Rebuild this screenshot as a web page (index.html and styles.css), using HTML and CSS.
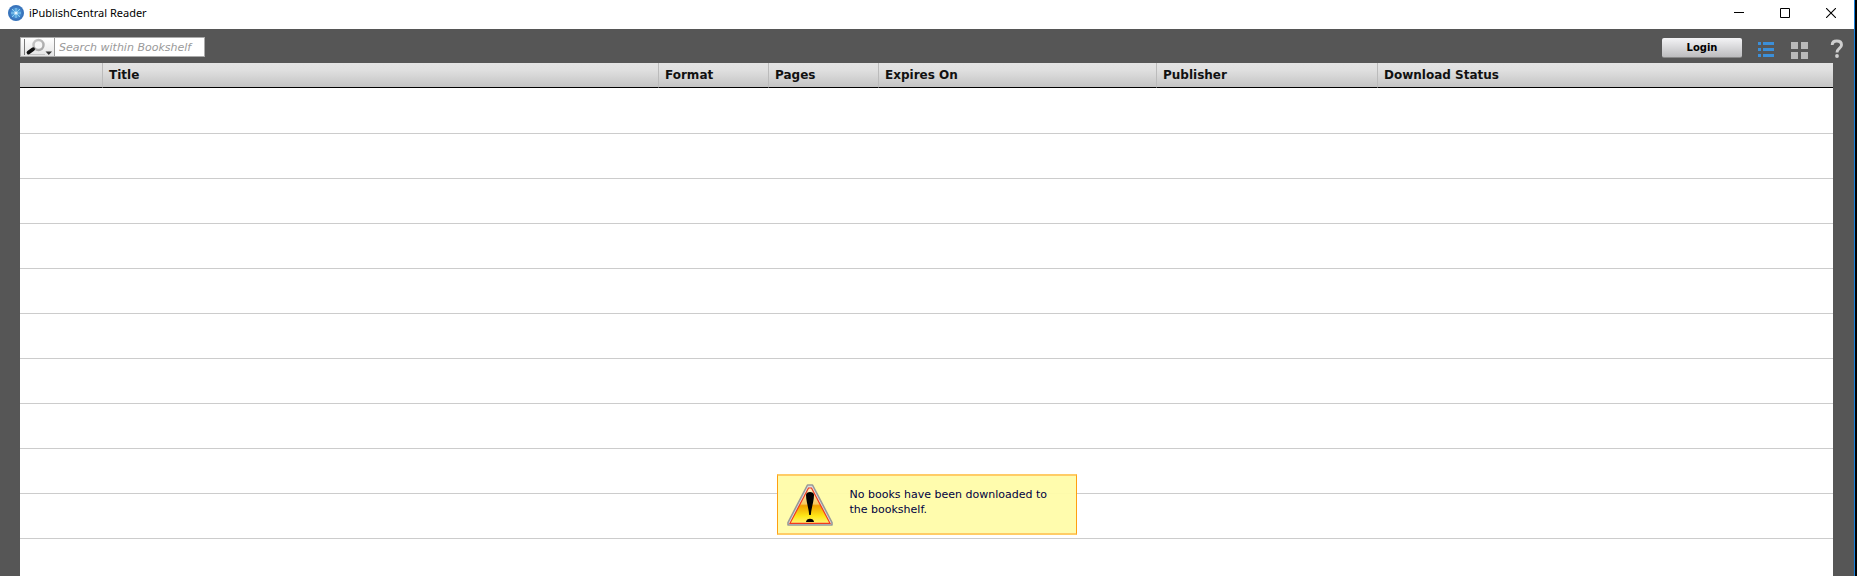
FILE: index.html
```html
<!DOCTYPE html>
<html lang="en">
<head>
<meta charset="utf-8">
<title>iPublishCentral Reader</title>
<link rel="stylesheet" href="styles.css">
</head>
<body>
<div class="window">
  <header class="titlebar">
    <svg class="app-icon" width="16" height="16" viewBox="0 0 16 16" aria-hidden="true">
      <circle cx="8" cy="8" r="8" fill="#3f7dc4"/>
      <circle cx="8" cy="8" r="7" fill="none" stroke="#3870b6"/>
      <circle cx="8" cy="8" r="5" fill="#4d9ad8"/>
      <path d="M8 3v10M3 8h10M4 4l8 8M12 4l-8 8" stroke="#8fcdf0" stroke-width="1"/>
      <circle cx="8" cy="8" r="1.6" fill="#e8f7ff"/>
    </svg>
    <h1 class="app-title">iPublishCentral Reader</h1>
    <div class="window-controls">
      <button class="window-button" type="button" aria-label="Minimize">
        <svg width="10" height="10" viewBox="0 0 10 10"><path d="M0 4.500h10" stroke="#000"/></svg>
      </button>
      <button class="window-button" type="button" aria-label="Maximize">
        <svg width="10" height="10" viewBox="0 0 10 10"><path d="M.5.5h9v9h-9z" fill="none" stroke="#000"/></svg>
      </button>
      <button class="window-button" type="button" aria-label="Close">
        <svg width="10" height="10" viewBox="0 0 10 10"><path d="M0 0l10 10M10 0L0 10" stroke="#000" stroke-width="1.100"/></svg>
      </button>
    </div>
  </header>

  <div class="toolbar">
    <form class="search">
      <button class="search-scope" type="button" aria-label="Search options">
        <svg width="32" height="18" viewBox="0 0 32 18">
          <defs>
            <linearGradient id="rim" x1="0" y1="0" x2="1" y2="1"><stop offset="0" stop-color="#c8c8c8"/><stop offset="1" stop-color="#a4a4a4"/></linearGradient>
          </defs>
          <path d="M3.500 1v16" stroke="#777"/>
          <path d="M6 16.500h18" stroke="#c4c4c4"/>
          <circle cx="17.500" cy="7" r="5" fill="#f6f6f6" stroke="url(#rim)" stroke-width="2.400"/>
          <path d="M14 10l-2 1.500" stroke="#777" stroke-width="2"/>
          <path d="M12 11.300L7.500 14.500" stroke="#111" stroke-width="3.800" stroke-linecap="round"/>
          <path d="M24.500 13.500h6.500l-3.200 3.500z" fill="#333"/>
        </svg>
      </button>
      <input class="search-input" type="text" aria-label="Search within Bookshelf" placeholder="Search within Bookshelf">
    </form>
    <div class="actions">
      <button class="login" type="button">Login</button>
      <button class="icon-button" type="button" aria-label="List view">
        <svg width="18" height="20" viewBox="0 0 18 20" fill="#3b8fd9">
          <path d="M1 3h3v3H1zM6 3h11v3H6zM1 9h3v3H1zM6 9h11v3H6zM1 15h3v3H1zM6 15h11v3H6z"/>
        </svg>
      </button>
      <button class="icon-button" type="button" aria-label="Grid view">
        <svg width="18" height="20" viewBox="0 0 18 20" fill="#b9b9b9">
          <path d="M0 3h7v7H0zM10 3h7v7h-7zM0 13h7v7H0zM10 13h7v7h-7z"/>
        </svg>
      </button>
      <button class="icon-button help" type="button" aria-label="Help">
        <svg width="14" height="20" viewBox="0 0 14 20">
          <path d="M2.200 6C2.200 3 4.200 2 6.800 2s4.700 1.400 4.700 4c0 3.400-4.500 3.600-4.500 7.500" fill="none" stroke="#cfcfcf" stroke-width="2.900"/>
          <circle cx="7" cy="17" r="1.900" fill="#cfcfcf"/>
        </svg>
      </button>
    </div>
  </div>

  <main class="shelf">
    <table class="books">
      <colgroup>
        <col class="col-cover"><col class="col-title"><col class="col-format"><col class="col-pages"><col class="col-expires"><col class="col-publisher"><col class="col-status">
      </colgroup>
      <thead>
        <tr><th aria-label="Cover"></th><th>Title</th><th>Format</th><th>Pages</th><th>Expires On</th><th>Publisher</th><th>Download Status</th></tr>
      </thead>
      <tbody>
        <tr><td colspan="7"></td></tr>
        <tr><td colspan="7"></td></tr>
        <tr><td colspan="7"></td></tr>
        <tr><td colspan="7"></td></tr>
        <tr><td colspan="7"></td></tr>
        <tr><td colspan="7"></td></tr>
        <tr><td colspan="7"></td></tr>
        <tr><td colspan="7"></td></tr>
        <tr><td colspan="7"></td></tr>
        <tr><td colspan="7"></td></tr>
      </tbody>
    </table>
    <div class="notice" role="status">
      <svg class="notice-icon" width="46" height="42" viewBox="0 0 46 42" aria-hidden="true">
        <defs>
          <linearGradient id="warn" x1="0" y1="0" x2="0" y2="1">
            <stop offset="0" stop-color="#fff3c8"/><stop offset=".45" stop-color="#f8c860"/>
            <stop offset=".5" stop-color="#f0a000"/><stop offset=".8" stop-color="#ffe818"/><stop offset="1" stop-color="#fff27a"/>
          </linearGradient>
        </defs>
        <path d="M20.500 1h5L45 38.500V41H1v-2.500z" fill="#ddd" stroke="#999" stroke-width="1.600" stroke-linejoin="round"/>
        <path d="M21.500 4h3L43 39.300H3z" fill="url(#warn)" stroke="#f23a1c" stroke-width="1.200"/>
        <path d="M19 11c0-4 8-4 8 0 0 6-2.500 12-3.200 20h-1.600C21.500 23 19 17 19 11z" fill="#000"/>
        <path d="M19 38c0-4.500 8-4.500 8 0z" fill="#000"/>
      </svg>
      <p class="notice-text">No books have been downloaded to the bookshelf.</p>
    </div>
  </main>
</div>
</body>
</html>
```

FILE: styles.css
```css
* {
  box-sizing: border-box;
}

body {
  margin: 0;
  background: #000;
  font-family: "DejaVu Sans", Verdana, sans-serif;
}

button {
  padding: 0;
  border: 0;
  background: none;
  font-family: inherit;
}

svg {
  display: block;
}

.window {
  display: flex;
  flex-direction: column;
  height: 100vh;
  margin-right: 2px;
  border-right: 1px solid #1a80d8;
  background: #565656;
  overflow: hidden;
}

.titlebar {
  display: flex;
  flex: none;
  align-items: center;
  height: 29px;
  padding: 0 0 3px 8px;
  background: #fff;
}

.app-title {
  flex: 1;
  margin: 0 0 0 5px;
  color: #000;
  font: 400 11px/20px "Noto Sans", "Open Sans", sans-serif;
}

.window-controls {
  display: flex;
}

.window-button {
  display: flex;
  align-items: center;
  justify-content: center;
  width: 46px;
  height: 26px;
}

.toolbar {
  display: flex;
  flex: none;
  justify-content: space-between;
  height: 34px;
  padding: 8px 10px 0 20px;
}

.search {
  display: flex;
  width: 185px;
  height: 20px;
  border: 1px solid #aaa;
  background: #fff;
}

.search-scope {
  width: 34px;
  border-right: 1px solid #999;
  background: linear-gradient(#fff, #e4e4e4);
}

.search-input {
  flex: 1;
  min-width: 0;
  padding: 1px 0 0 4px;
  border: 0;
  background: #fff;
  color: #222;
  font: italic 11px/16px "DejaVu Sans", Verdana, sans-serif;
}

.search-input::placeholder {
  color: #999;
}

.actions {
  display: flex;
  align-items: flex-start;
}

.login {
  width: 80px;
  height: 20px;
  margin: 1px 15px 0 0;
  border-bottom: 1px solid #888;
  border-radius: 2px;
  background: linear-gradient(#f4f4f6, #bcbcbe);
  color: #000;
  font-size: 10px;
  font-weight: 700;
}

.icon-button {
  margin: 2px 16px 0 0;
}

.icon-button.help {
  margin: 2px 0 0 5px;
}

.shelf {
  position: relative;
  flex: 1;
  min-height: 0;
  margin: 0 21px 0 20px;
  background: #fff;
  overflow: hidden;
}

.books {
  width: 100%;
  table-layout: fixed;
  border-spacing: 0;
}

.col-cover { width: 82px; }
.col-format,
.col-pages { width: 110px; }
.col-expires { width: 278px; }
.col-publisher { width: 221px; }
.col-status { width: 456px; }

.books thead tr {
  background: linear-gradient(#e3e3e3, #dfdfdf 30%, #c2c2c2);
}

.books th {
  height: 25px;
  padding: 0 6px 1px;
  border-bottom: 1px solid #000;
  border-left: 1px solid #bbb;
  color: #111;
  font-size: 12px;
  font-weight: 700;
  line-height: 16px;
  text-align: left;
}

.books th:first-child {
  border-left: 0;
}

.books td {
  height: 45px;
  padding: 0;
  border-bottom: 1px solid #ccc;
}

.books tbody tr:first-child td {
  height: 46px;
}

.notice {
  position: absolute;
  top: 411px;
  left: 50%;
  display: flex;
  width: 300px;
  margin-left: -150px;
  padding: 8px 16px 7px 9px;
  border-style: solid;
  border-width: 2px 1px;
  border-color: #ffcc66 #ff9f10;
  background: rgba(255, 252, 170, .96);
}

.notice-icon {
  flex: none;
}

.notice-text {
  margin: 3px 0 0 17px;
  color: #000040;
  font-size: 11px;
  line-height: 15px;
}
```
